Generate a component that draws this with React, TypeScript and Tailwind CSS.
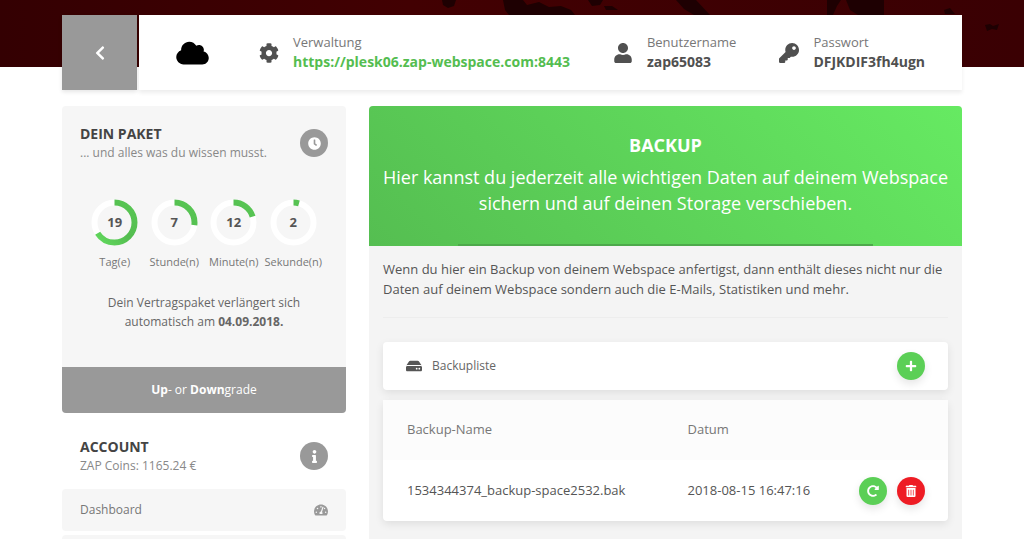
import type { ReactNode } from 'react';
import {
  FaChevronLeft, FaCloud, FaCog, FaUser, FaKey, FaClock, FaInfo,
  FaTachometerAlt, FaHdd, FaPlus, FaRedoAlt, FaTrashAlt,
} from 'react-icons/fa';

function Fact({ icon, label, children }: { icon: ReactNode; label: string; children: ReactNode }) {
  return (
    <div className="flex items-center gap-3.5">
      <span className="text-xl text-[#505050]">{icon}</span>
      <div className="pb-0.5">
        <div className="text-[13px] leading-[19px] text-[#777]">{label}</div>
        <div className="text-[14px] leading-[19px] font-bold text-[#505050]">{children}</div>
      </div>
    </div>
  );
}

function Ring({ value, max, label }: { value: number; max: number; label: string }) {
  const length = 2 * Math.PI * 20;
  return (
    <div className="flex flex-col items-center gap-2">
      <div className="grid size-[47px] place-items-center">
        <svg viewBox="0 0 47 47" className="col-start-1 row-start-1 size-full -rotate-90" fill="none" strokeWidth="6">
          <circle cx="23.5" cy="23.5" r="20" stroke="#fff" />
          <circle cx="23.5" cy="23.5" r="20" stroke="url(#ring)" strokeDasharray={`${(length * value) / max} ${length}`} />
        </svg>
        <span className="col-start-1 row-start-1 text-[13px] font-bold text-[#555]">{value}</span>
      </div>
      <span className="text-[11px] leading-4 text-[#777]">{label}</span>
    </div>
  );
}

function PanelHead({ title, sub, icon }: { title: string; sub: string; icon: ReactNode }) {
  return (
    <div className="flex items-center justify-between px-[18px]">
      <div>
        <h2 className="text-[14px] leading-[19px] font-bold text-[#444]">{title}</h2>
        <p className="text-[12px] leading-[19px] text-[#888]">{sub}</p>
      </div>
      <span className="flex size-7 items-center justify-center rounded-full bg-[#999] text-[13px] text-white">{icon}</span>
    </div>
  );
}

const round = 'flex size-7 items-center justify-center rounded-full text-[12px] text-white shadow-[0_4px_8px_rgba(0,0,0,0.1)]';

export default function App() {
  return (
    <div className="h-screen overflow-hidden bg-white font-['Open_Sans','Noto_Sans',sans-serif]">
      <div className="relative">
        <svg className="absolute inset-x-0 top-0 h-[67px] w-full" viewBox="0 0 1024 67" preserveAspectRatio="none" aria-hidden="true">
          <defs>
            <linearGradient id="sky" x1="0" x2="1">
              <stop offset="0" stopColor="#340002" />
              <stop offset="0.4" stopColor="#420002" />
              <stop offset="1" stopColor="#3a0003" />
            </linearGradient>
            <linearGradient id="ring" gradientUnits="userSpaceOnUse" x1="4" y1="4" x2="43" y2="43">
              <stop offset="0" stopColor="#62da5e" />
              <stop offset="0.5" stopColor="#54bd50" />
              <stop offset="1" stopColor="#58c654" />
            </linearGradient>
          </defs>
          <rect width="1024" height="67" fill="url(#sky)" />
          <g fill="#1e0002">
            <path d="M442 0h14l-2 6-6 2-5-3z" />
            <path d="M503 0h20l4 5 12-3 10 5 12-1 10 4 4 5h-66l-4-5z" />
            <path d="M588 0h15l-3 5-8 1zM604 6h8l6 4h-12z" />
            <path d="M676 0h20l14 15h-16l-10-6z" />
            <path d="M827 0h14l-4 6-4 9h-6zM846 0h38v15h-26l-8-5z" />
            <path d="M944 10l6-2 5 6h-10zM985 25l5-1 3 2 6-2-2 6-5-1-5 2z" />
          </g>
        </svg>
      </div>

      <div className="relative mx-auto flex max-w-[900px] flex-col gap-4 pt-[15px]">
        <header className="flex gap-0.5">
          <button aria-label="Zurück" className="flex size-[75px] shrink-0 items-center justify-center bg-[#999] text-[16px] text-white shadow-[0_2px_4px_rgba(0,0,0,0.1)]">
            <FaChevronLeft />
          </button>
          <div className="flex h-[75px] grow items-center bg-white px-[37px] shadow-[0_3px_4px_rgba(0,0,0,0.07)]">
            <FaCloud className="mr-[50px] h-[26px] w-[33px] shrink-0 text-black" />
            <div className="flex grow items-center justify-between">
              <Fact icon={<FaCog />} label="Verwaltung">
                <a href="https://plesk06.zap-webspace.com:8443" className="text-[#54bd50]">https://plesk06.zap-webspace.com:8443</a>
              </Fact>
              <Fact icon={<FaUser />} label="Benutzername">zap65083</Fact>
              <Fact icon={<FaKey />} label="Passwort">DFJKDIF3fh4ugn</Fact>
            </div>
          </div>
        </header>

        <div className="flex items-start gap-[23px]">
          <aside className="w-[284px] shrink-0">
            <section className="overflow-hidden rounded bg-[#f6f6f6] pt-[18px]">
              <PanelHead title="DEIN PAKET" sub="... und alles was du wissen musst." icon={<FaClock />} />
              <div className="mt-[37px] grid grid-cols-4 px-[23px]">
                <Ring value={19} max={29} label="Tag(e)" />
                <Ring value={7} max={26} label="Stunde(n)" />
                <Ring value={12} max={60} label="Minute(n)" />
                <Ring value={2} max={45} label="Sekunde(n)" />
              </div>
              <p className="mt-[23px] mb-9 text-center text-[12px] leading-[19px] text-[#666]">
                Dein Vertragspaket verlängert sich<br />automatisch am <b>04.09.2018.</b>
              </p>
              <button className="h-[46px] w-full bg-[#999] text-[12px] text-white"><b>Up</b>- or <b>Down</b>grade</button>
            </section>
            <section className="pt-6">
              <PanelHead title="ACCOUNT" sub="ZAP Coins: 1165.24 €" icon={<FaInfo />} />
              <nav className="mt-3.5 flex flex-col gap-1 text-[12px] text-[#777]">
                <a href="#dashboard" className="flex h-[42px] items-center justify-between rounded bg-[#f6f6f6] px-[18px]">
                  Dashboard <FaTachometerAlt className="text-[14px] text-[#999]" />
                </a>
                <div className="h-[42px] rounded bg-[#f6f6f6]" />
              </nav>
            </section>
          </aside>

          <main className="min-w-0 grow overflow-hidden rounded bg-[#f4f4f4] pb-20">
            <div className="flex flex-col items-center bg-linear-[45deg] from-[#55be51] to-[#66ea62] text-center text-white">
              <h1 className="pt-[27px] text-[18px] leading-6 font-bold">BACKUP</h1>
              <p className="pt-[7px] pb-7 text-[18px] leading-[26px]">
                Hier kannst du jederzeit alle wichtigen Daten auf deinem Webspace<br />sichern und auf deinen Storage verschieben.
              </p>
              <div className="h-0.5 w-[70%] bg-[#4da94b]" />
            </div>
            <div className="px-3.5">
              <p className="pt-[13px] text-[13px] leading-5 text-[#555]">
                Wenn du hier ein Backup von deinem Webspace anfertigst, dann enthält dieses nicht nur die<br />
                Daten auf deinem Webspace sondern auch die E-Mails, Statistiken und mehr.
              </p>
              <hr className="mt-[18px] mb-6 border-[#ededed]" />
              <div className="flex h-12 items-center rounded-sm bg-white px-[23px] shadow-[0_3px_8px_rgba(0,0,0,0.09)]">
                <FaHdd className="mr-2.5 text-[16px] text-[#555]" />
                <span className="grow text-[12px] text-[#666]">Backupliste</span>
                <button aria-label="Backup erstellen" className={`${round} bg-[#5bcf56]`}><FaPlus /></button>
              </div>
              <table className="mt-2.5 w-full table-fixed rounded-sm bg-white text-left text-[13px] shadow-[0_3px_8px_rgba(0,0,0,0.09)]">
                <thead className="bg-[#fcfcfc] text-[#777]">
                  <tr className="h-[60px]">
                    <th className="w-1/2 pl-6 font-normal">Backup-Name</th>
                    <th className="pl-[22px] font-normal">Datum</th>
                    <th className="w-[120px]" aria-label="Aktionen" />
                  </tr>
                </thead>
                <tbody className="text-[#555]">
                  <tr className="h-[61px]">
                    <td className="pl-6">1534344374_backup-space2532.bak</td>
                    <td className="pl-[22px]">2018-08-15 16:47:16</td>
                    <td>
                      <div className="flex justify-end gap-2.5 pr-[23px]">
                        <button aria-label="Wiederherstellen" className={`${round} bg-[#5bcf56]`}><FaRedoAlt /></button>
                        <button aria-label="Löschen" className={`${round} bg-[#ee1c24]`}><FaTrashAlt /></button>
                      </div>
                    </td>
                  </tr>
                </tbody>
              </table>
            </div>
          </main>
        </div>
      </div>
    </div>
  );
}
